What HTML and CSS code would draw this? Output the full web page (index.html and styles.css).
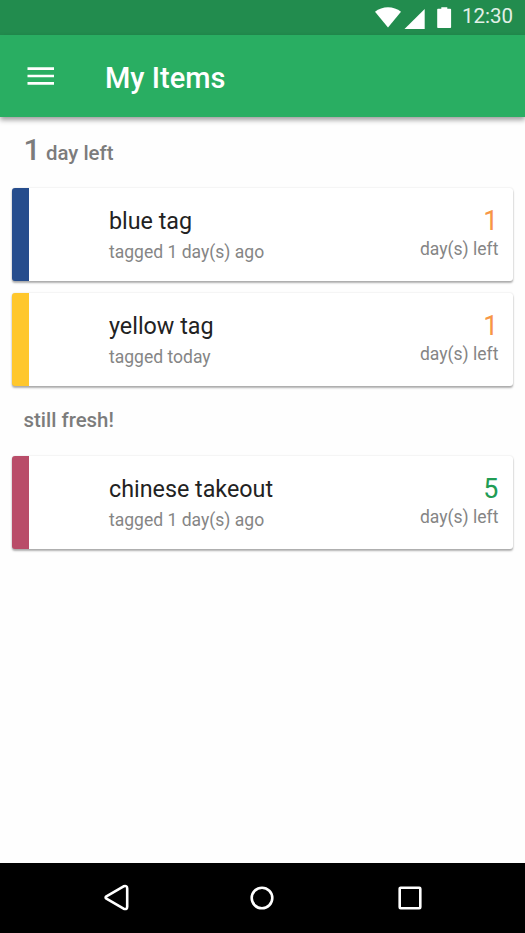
FILE: index.html
```html
<!DOCTYPE html>
<html lang="en">
<head>
<meta charset="utf-8">
<title>My Items</title>
<link rel="stylesheet" href="styles.css">
</head>
<body>
<div class="status">
  <svg class="status-icons" width="80" height="35" viewBox="0 0 80 35" fill="#fff">
    <path d="M0 11.800C7.200 5.600 18.800 5.600 26 11.800L13 27.500Z"/>
    <path d="M49.700 9V29H29.500Z"/>
    <path d="M66.300 7.300h6v1.500h3q.8 0 .8.800v17.600q0 .8-.8.800H63q-.8 0-.8-.8V9.600q0-.8.800-.8h3.300z"/>
  </svg>
  <span class="clock">12:30</span>
</div>
<header class="appbar">
  <svg class="menu" width="28" height="20" viewBox="0 0 28 20" fill="#fff"><path d="M.5 1.200h26.500v2.700H.500zM.5 8.700h26.500v2.600H.500zM.5 16h26.500v2.700H.500z"/></svg>
  <h1 class="title">My Items</h1>
</header>
<main class="list">
  <h2 class="section section-first"><span class="section-num">1</span> <span class="section-label">day left</span></h2>
  <article class="card blue">
    <div class="info"><div class="name">blue tag</div><div class="sub">tagged 1 day(s) ago</div></div>
    <div class="remaining"><div class="num">1</div><div class="days">day(s) left</div></div>
  </article>
  <article class="card yellow">
    <div class="info"><div class="name">yellow tag</div><div class="sub">tagged today</div></div>
    <div class="remaining"><div class="num">1</div><div class="days">day(s) left</div></div>
  </article>
  <h2 class="section section-fresh"><span class="section-label">still fresh!</span></h2>
  <article class="card red">
    <div class="info"><div class="name">chinese takeout</div><div class="sub">tagged 1 day(s) ago</div></div>
    <div class="remaining"><div class="num fresh">5</div><div class="days">day(s) left</div></div>
  </article>
</main>
<nav class="nav">
  <svg width="26" height="28" viewBox="0 0 26 28"><path d="M2.400 12.300 19.600 2.300Q23.200 1.100 23.200 4.500V22.700Q23.200 26 19.600 24.700L2.400 14.700Q.8 13.500 2.400 12.300Z"/></svg>
  <svg class="home" width="26" height="28" viewBox="0 0 26 28"><circle cx="13" cy="14" r="10.300"/></svg>
  <svg width="26" height="28" viewBox="0 0 26 28"><rect x="2.700" y="3.700" width="20.600" height="20.600" rx="1"/></svg>
</nav>
</body>
</html>
```

FILE: styles.css
```css
* { box-sizing: border-box; }
body {
  margin: 0;
  height: 933px;
  display: flex;
  flex-direction: column;
  background: #fefefe;
  font-family: Roboto, sans-serif;
  overflow: hidden;
}
.status {
  height: 35px;
  display: flex;
  justify-content: flex-end;
  background: #228c4e;
  padding-right: 12px;
}
.status-icons { margin-right: 7px; }
.clock {
  font-size: 20.5px;
  line-height: 33px;
  color: #e2f0e8;
}
.appbar {
  height: 82px;
  display: flex;
  align-items: center;
  background: #29ae62;
  padding-left: 27px;
  box-shadow: 0 3px 5px rgba(0, 0, 0, .38);
}
.title {
  margin: 3px 0 0 50px;
  font-size: 29px;
  font-weight: 500;
  line-height: 34px;
  color: #fff;
}
.list { flex: 1; padding: 0 12px 0 11.5px; }
.section {
  margin: 0;
  padding-left: 12px;
  font-weight: 500;
  color: #7c7c7c;
}
.section-first { height: 71px; line-height: 66px; }
.section-fresh { height: 70px; line-height: 67px; }
.section-num { font-size: 30px; }
.section-label { font-size: 20.4px; }
.section-first .section-label { margin-left: -.5px; }
.card {
  height: 93px;
  display: flex;
  justify-content: space-between;
  margin-right: -.4px;
  padding: 18px 15px 0 80.5px;
  border-left: 17.5px solid;
  border-radius: 3px;
  background: #fff;
  box-shadow: 0 2px 2px rgba(0, 0, 0, .3), 0 0 2px rgba(0, 0, 0, .14);
}
.card + .card { margin-top: 12px; }
.blue { border-left-color: #264d8d; }
.yellow { border-left-color: #ffc72c; }
.red { border-left-color: #b94d69; }
.name {
  font-size: 23.3px;
  line-height: 30px;
  color: #222;
}
.sub, .days {
  font-size: 17.55px;
  color: #858585;
}
.sub { line-height: 33px; }
.remaining { text-align: right; }
.num {
  font-size: 26.8px;
  line-height: 30px;
  color: #f79646;
}
.fresh { color: #219c54; }
.days { line-height: 26px; }
.nav {
  height: 70px;
  display: flex;
  justify-content: space-between;
  align-items: center;
  padding: 0 102px 0 104px;
  background: #000;
}
.nav svg { fill: none; stroke: #fff; stroke-width: 2.6; stroke-linejoin: round; }
.home { margin-right: 3px; }
```
